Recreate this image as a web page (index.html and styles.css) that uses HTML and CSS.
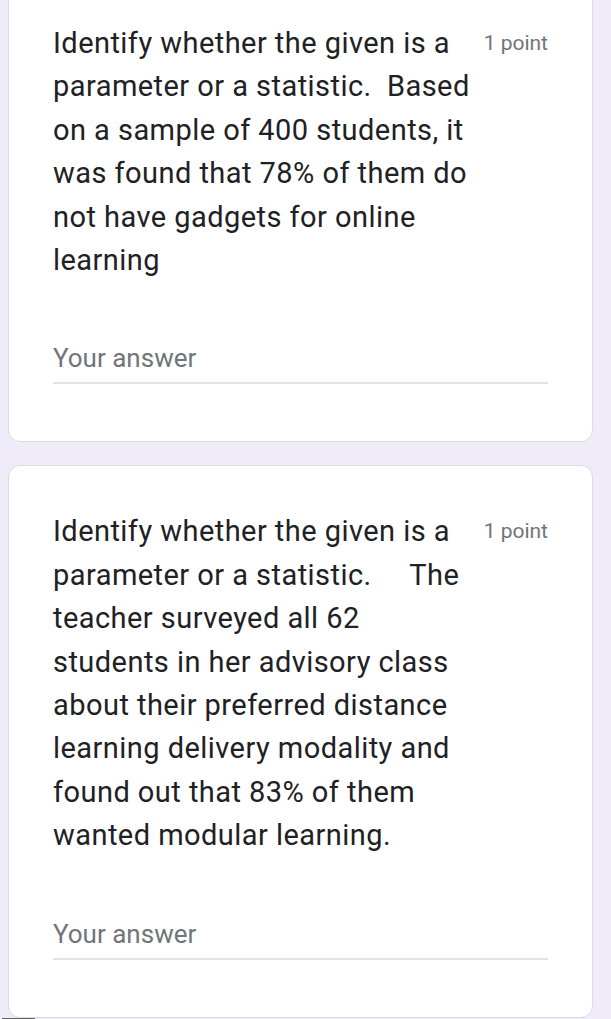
FILE: index.html
```html
<!DOCTYPE html>
<html lang="en">
<head>
<meta charset="utf-8">
<title>Form questions</title>
<link rel="stylesheet" href="styles.css">
</head>
<body>
<main class="form">
  <section class="card card-first">
    <div class="q-head">
      <div class="q-title">Identify whether the given is a parameter or a statistic.  Based on a sample of 400 students, it was found that 78% of them do not have gadgets for online learning</div>
      <div class="q-points">1 point</div>
    </div>
    <div class="answer">Your answer</div>
  </section>
  <section class="card">
    <div class="q-head">
      <div class="q-title">Identify whether the given is a parameter or a statistic.     The teacher surveyed all 62 students in her advisory class about their preferred distance learning delivery modality and found out that 83% of them wanted modular learning.</div>
      <div class="q-points">1 point</div>
    </div>
    <div class="answer">Your answer</div>
  </section>
  <div class="edge-bar"></div>
</main>
</body>
</html>
```
FILE: styles.css
```css
html, body {
  margin: 0;
  padding: 0;
  background: #f0ebf8;
  overflow: hidden;
}

.form {
  display: flex;
  flex-direction: column;
  gap: 23px;
  padding: 0 18px 0 8px;
}

.card {
  background: #ffffff;
  border: 1px solid #dadce0;
  border-radius: 12px;
  padding: 44px 44px 57px 44px;
}

.card-first {
  margin-top: -23px;
}

.q-head {
  display: flex;
  align-items: flex-start;
  justify-content: space-between;
}

.q-title {
  flex: 0 0 422px;
  font-family: Roboto, "Liberation Sans", sans-serif;
  font-size: 29px;
  letter-spacing: 0.45px;
  line-height: 43.4px;
  color: #202124;
  white-space: pre-wrap;
}

.q-points {
  flex: none;
  font-family: Roboto, "Liberation Sans", sans-serif;
  font-size: 21px;
  line-height: 43.4px;
  color: #70757a;
}

.answer {
  margin-top: 61px;
  font-family: Roboto, "Liberation Sans", sans-serif;
  font-size: 26px;
  line-height: 30px;
  color: #70757a;
  padding-bottom: 9px;
  border-bottom: 2px solid #e3e3e3;
}

.edge-bar {
  margin: -23px 0 0 -6px;
  width: 33px;
  height: 3px;
  background: #5f6368;
}
```
